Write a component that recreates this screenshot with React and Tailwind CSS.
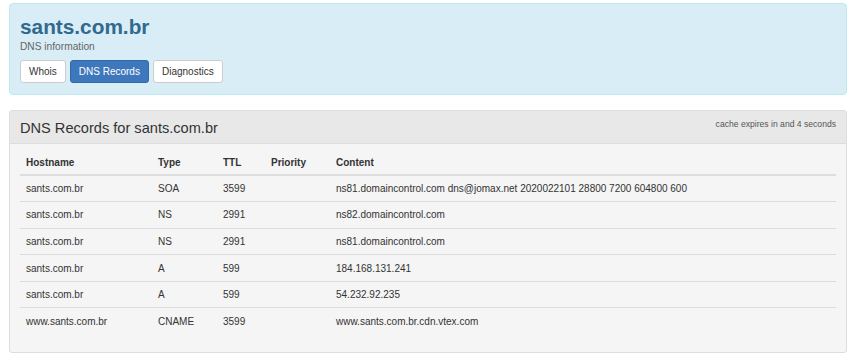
import React from "react";

const rows = [
  ["sants.com.br", "SOA", "3599", "", "ns81.domaincontrol.com dns@jomax.net 2020022101 28800 7200 604800 600"],
  ["sants.com.br", "NS", "2991", "", "ns82.domaincontrol.com"],
  ["sants.com.br", "NS", "2991", "", "ns81.domaincontrol.com"],
  ["sants.com.br", "A", "599", "", "184.168.131.241"],
  ["sants.com.br", "A", "599", "", "54.232.92.235"],
  ["www.sants.com.br", "CNAME", "3599", "", "www.sants.com.br.cdn.vtex.com"],
];

export default function App() {
  return (
    <div className="w-[850px] h-[361px] bg-white text-[#333] overflow-hidden" style={{ fontFamily: '"Liberation Sans", Arial, sans-serif' }}>
      <div className="pt-[3px] px-[9px] pr-[3px]">
        <div className="h-[92px] bg-[#d9edf7] border border-[#bce8f1] rounded-[4px] px-[10px] pt-[9px]">
          <h1 className="text-[20.8px] leading-[28px] font-bold text-[#31698f]">sants.com.br</h1>
          <div className="text-[10.2px] leading-[13px] text-[#666] mt-[-1px]">DNS information</div>
          <div className="flex gap-[4px] mt-[7px]">
            <button className="h-[23px] px-[8px] text-[10px] bg-white border border-[#ccc] rounded-[3px] text-[#333]">Whois</button>
            <button className="h-[23px] px-[8px] text-[10px] bg-[#3f77bd] border border-[#2e6da4] rounded-[3px] text-white">DNS Records</button>
            <button className="h-[23px] px-[8px] text-[10px] bg-white border border-[#ccc] rounded-[3px] text-[#333]">Diagnostics</button>
          </div>
        </div>
      </div>
      <div className="mt-[15px] ml-[9px] mr-[3px] h-[243px] border border-[#ddd] rounded-[3px] bg-[#f5f5f5]">
        <div className="h-[33px] bg-[#e8e8e8] border-b border-[#ddd] flex items-start justify-between pl-[10px] pr-[10px]">
          <div className="text-[14.6px] leading-[18px] mt-[8px] text-[#333]">DNS Records for sants.com.br</div>
          <div className="text-[8.6px] mt-[7px] text-[#555]">cache expires in and 4 seconds</div>
        </div>
        <div className="px-[10px] pt-[6px]">
          <table className="w-full text-[10px] border-collapse">
            <thead>
              <tr className="h-[25px] border-b-2 border-[#ddd]">
                <th className="text-left font-bold pl-[6px] w-[138px]">Hostname</th>
                <th className="text-left font-bold w-[65px]">Type</th>
                <th className="text-left font-bold w-[48px]">TTL</th>
                <th className="text-left font-bold w-[65px]">Priority</th>
                <th className="text-left font-bold">Content</th>
              </tr>
            </thead>
            <tbody>
              {rows.map((r, i) => (
                <tr key={i} className={"h-[26.6px] " + (i < rows.length - 1 ? "border-b border-[#ddd]" : "")}>
                  <td className="pl-[6px]">{r[0]}</td>
                  <td>{r[1]}</td>
                  <td>{r[2]}</td>
                  <td>{r[3]}</td>
                  <td>{r[4]}</td>
                </tr>
              ))}
            </tbody>
          </table>
        </div>
      </div>
    </div>
  );
}
